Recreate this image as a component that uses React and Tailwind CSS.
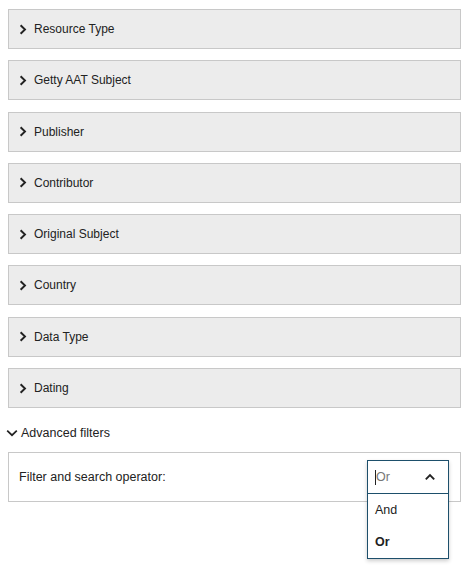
import React from 'react';

const facets = [
  'Resource Type',
  'Getty AAT Subject',
  'Publisher',
  'Contributor',
  'Original Subject',
  'Country',
  'Data Type',
  'Dating',
];

function Chevron({ dir = 'right', className = '' }) {
  if (dir === 'right') {
    return (
      <svg width="8" height="11" viewBox="0 0 8 11" className={className}>
        <path d="M1.6 1.2 L6 5.5 L1.6 9.8" fill="none" stroke="#222" strokeWidth="1.9" />
      </svg>
    );
  }
  return (
    <svg width="12" height="8" viewBox="0 0 12 8" className={className}>
      {dir === 'down' ? (
        <path d="M1.2 1.6 L6 6.2 L10.8 1.6" fill="none" stroke="#222" strokeWidth="1.7" />
      ) : (
        <path d="M1.8 6.4 L6 2.2 L10.2 6.4" fill="none" stroke="#222" strokeWidth="1.9" />
      )}
    </svg>
  );
}

export default function App() {
  return (
    <div
      className="w-[468px] h-[571px] bg-white text-[12.5px] text-[#222] relative"
      style={{ fontFamily: '"Liberation Sans", Arial, sans-serif' }}
    >
      <div className="pl-[8px] pr-[7px] pt-[9px] flex flex-col gap-[11.3px]">
        {facets.map((f) => (
          <div
            key={f}
            className="h-[40px] bg-[#ececec] border border-[#c8c8c8] flex items-center pl-[10px] gap-[7px] text-[12px]"
          >
            <Chevron dir="right" />
            <span>{f}</span>
          </div>
        ))}
      </div>

      <div className="pl-[6px] mt-[17px] flex items-center gap-[3px] h-[16px]">
        <Chevron dir="down" />
        <span>Advanced filters</span>
      </div>

      <div className="mx-[8px] mr-[7px] mt-[11px] h-[50px] border border-[#c8c8c8] flex items-center justify-between pl-[10px] pr-[11px]">
        <span>Filter and search operator:</span>
        <div className="relative w-[82px] h-[34px]">
          <div className="absolute left-0 top-0 w-[82px] bg-white border border-[#1d4f6b] shadow-[0_2px_4px_rgba(0,0,0,0.2)]">
            <div className="h-[33px] flex items-center justify-between pl-[7px] pr-[12px] border-b border-[#1d4f6b]">
              <span className="flex items-center text-[#777]">
                <span className="inline-block w-[1px] h-[15px] bg-[#222]"></span>
                Or
              </span>
              <Chevron dir="up" />
            </div>
            <div className="h-[32px] flex items-center pl-[7px]">And</div>
            <div className="h-[32px] flex items-center pl-[7px] font-bold">Or</div>
          </div>
        </div>
      </div>
    </div>
  );
}
